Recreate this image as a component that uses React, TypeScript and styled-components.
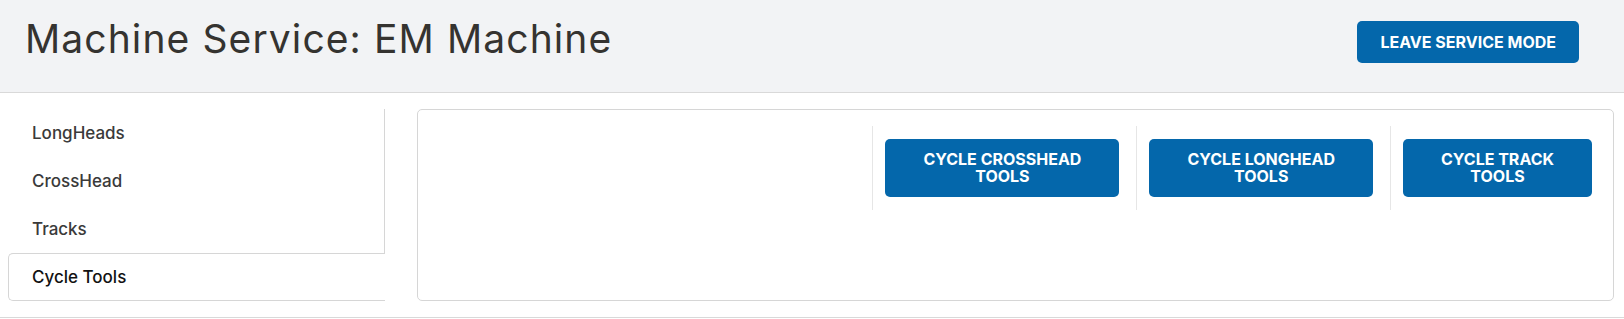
import React from "react";
import styled, { createGlobalStyle } from "styled-components";

const Global = createGlobalStyle`
  html, body { margin: 0; padding: 0; background: #ffffff; }
  body { font-family: Inter, "Liberation Sans", Arial, sans-serif; }
  * { box-sizing: border-box; }
`;

const Page = styled.div`
  width: 1624px;
  display: flex;
  flex-direction: column;
`;

const Header = styled.header`
  height: 93px;
  background: #f2f3f5;
  border-bottom: 1px solid #d9d9d9;
  display: flex;
  justify-content: space-between;
  align-items: flex-start;
  padding: 0 45px 0 25px;
`;

const Title = styled.h1`
  margin: 0;
  padding-top: 16px;
  font-family: Inter, "Liberation Sans", sans-serif;
  font-weight: 400;
  font-size: 39px;
  line-height: 46px;
  color: #353330;
  letter-spacing: 1.1px;
`;

const PrimaryButton = styled.button<{ $compact?: boolean }>`
  border: none;
  border-radius: 5px;
  background: #0467ab;
  color: #ffffff;
  font-family: Inter, "Liberation Sans", Arial, sans-serif;
  font-weight: 700;
  font-size: 16px;
  text-transform: uppercase;
  cursor: pointer;
  ${(p) =>
    p.$compact
      ? `height: 42px; padding: 0 23px; line-height: 42px; margin-top: 21px;`
      : `padding: 12px 38px; line-height: 17px; text-align: center;`}
`;

const Body = styled.main`
  display: flex;
  gap: 32px;
  padding: 16px 10px 16px 8px;
  border-bottom: 1px solid #d9d9d9;
`;

const Sidebar = styled.nav`
  width: 377px;
  display: flex;
  flex-direction: column;
`;

const NavItem = styled.div<{ $active?: boolean }>`
  height: 48px;
  display: flex;
  align-items: center;
  padding-left: 24px;
  font-family: Inter, "Liberation Sans", sans-serif;
  font-size: 17px;
  font-weight: 500;
  color: ${(p) => (p.$active ? "#121212" : "#3a3a3a")};
  ${(p) =>
    p.$active
      ? `border: 1px solid #d6d6d6; border-right: none; border-radius: 5px 0 0 5px; padding-left: 23px;`
      : `border-right: 1px solid #d6d6d6;`}
`;

const Panel = styled.section`
  flex: 1;
  border: 1px solid #d6d6d6;
  border-radius: 5px;
  height: 192px;
  display: flex;
  justify-content: flex-end;
  align-items: flex-start;
  padding: 16px 4px 0 0;
`;

const ToolColumn = styled.div`
  border-left: 1px solid #e6e6e6;
  padding: 13px 17px 13px 12px;
  display: flex;
`;

const tools = [
  ["CYCLE CROSSHEAD", "TOOLS"],
  ["CYCLE LONGHEAD", "TOOLS"],
  ["CYCLE TRACK", "TOOLS"],
];

const navItems = ["LongHeads", "CrossHead", "Tracks", "Cycle Tools"];

export default function App() {
  return (
    <Page>
      <Global />
      <Header>
        <Title>Machine Service: EM Machine</Title>
        <PrimaryButton $compact>Leave Service Mode</PrimaryButton>
      </Header>
      <Body>
        <Sidebar>
          {navItems.map((n) => (
            <NavItem key={n} $active={n === "Cycle Tools"}>
              {n}
            </NavItem>
          ))}
        </Sidebar>
        <Panel>
          {tools.map(([a, b]) => (
            <ToolColumn key={a}>
              <PrimaryButton>
                {a}
                <br />
                {b}
              </PrimaryButton>
            </ToolColumn>
          ))}
        </Panel>
      </Body>
    </Page>
  );
}
